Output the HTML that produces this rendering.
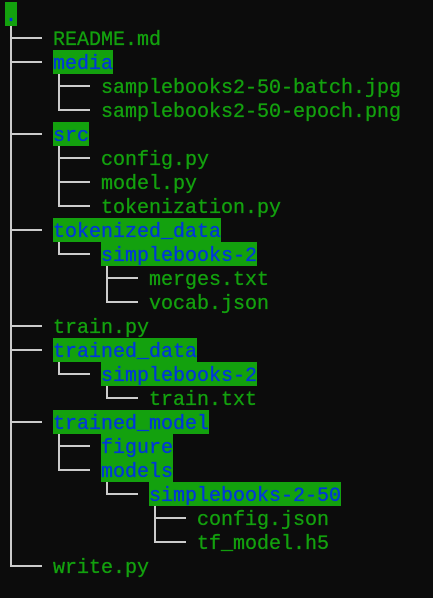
<!DOCTYPE html>
<html><head><style>
html,body{margin:0;padding:0;background:#0c0c0c;width:433px;height:598px;overflow:hidden;position:relative}
.t{position:absolute;padding-top:2px;height:22px;line-height:26px;font-family:"Liberation Mono",monospace;font-size:20px;color:#13a10e;white-space:pre;-webkit-text-stroke:0.3px #13a10e}
.h{background:#13a10e;color:#0037da;-webkit-text-stroke:0.3px #0037da}
.v{position:absolute;width:2px;background:#cccccc}
.r{position:absolute;height:2px;width:32px;background:#cccccc}
</style></head><body>
<div class="t h" style="left:5px;top:2px">.</div>
<div class="t" style="left:53px;top:26px">README.md</div>
<div class="t h" style="left:53px;top:50px">media</div>
<div class="t" style="left:101px;top:74px">samplebooks2-50-batch.jpg</div>
<div class="t" style="left:101px;top:98px">samplebooks2-50-epoch.png</div>
<div class="t h" style="left:53px;top:122px">src</div>
<div class="t" style="left:101px;top:146px">config.py</div>
<div class="t" style="left:101px;top:170px">model.py</div>
<div class="t" style="left:101px;top:194px">tokenization.py</div>
<div class="t h" style="left:53px;top:218px">tokenized_data</div>
<div class="t h" style="left:101px;top:242px">simplebooks-2</div>
<div class="t" style="left:149px;top:266px">merges.txt</div>
<div class="t" style="left:149px;top:290px">vocab.json</div>
<div class="t" style="left:53px;top:314px">train.py</div>
<div class="t h" style="left:53px;top:338px">trained_data</div>
<div class="t h" style="left:101px;top:362px">simplebooks-2</div>
<div class="t" style="left:149px;top:386px">train.txt</div>
<div class="t h" style="left:53px;top:410px">trained_model</div>
<div class="t h" style="left:101px;top:434px">figure</div>
<div class="t h" style="left:101px;top:458px">models</div>
<div class="t h" style="left:149px;top:482px">simplebooks-2-50</div>
<div class="t" style="left:197px;top:506px">config.json</div>
<div class="t" style="left:197px;top:530px">tf_model.h5</div>
<div class="t" style="left:53px;top:554px">write.py</div>

<div class="v" style="left:10px;top:26px;height:541px"></div>
<div class="v" style="left:58px;top:74px;height:37px"></div>
<div class="v" style="left:58px;top:146px;height:61px"></div>
<div class="v" style="left:58px;top:242px;height:13px"></div>
<div class="v" style="left:106px;top:266px;height:37px"></div>
<div class="v" style="left:58px;top:362px;height:13px"></div>
<div class="v" style="left:106px;top:386px;height:13px"></div>
<div class="v" style="left:58px;top:434px;height:37px"></div>
<div class="v" style="left:106px;top:482px;height:13px"></div>
<div class="v" style="left:154px;top:506px;height:37px"></div>

<div class="r" style="left:10px;top:37px"></div>
<div class="r" style="left:10px;top:61px"></div>
<div class="r" style="left:58px;top:85px"></div>
<div class="r" style="left:58px;top:109px"></div>
<div class="r" style="left:10px;top:133px"></div>
<div class="r" style="left:58px;top:157px"></div>
<div class="r" style="left:58px;top:181px"></div>
<div class="r" style="left:58px;top:205px"></div>
<div class="r" style="left:10px;top:229px"></div>
<div class="r" style="left:58px;top:253px"></div>
<div class="r" style="left:106px;top:277px"></div>
<div class="r" style="left:106px;top:301px"></div>
<div class="r" style="left:10px;top:325px"></div>
<div class="r" style="left:10px;top:349px"></div>
<div class="r" style="left:58px;top:373px"></div>
<div class="r" style="left:106px;top:397px"></div>
<div class="r" style="left:10px;top:421px"></div>
<div class="r" style="left:58px;top:445px"></div>
<div class="r" style="left:58px;top:469px"></div>
<div class="r" style="left:106px;top:493px"></div>
<div class="r" style="left:154px;top:517px"></div>
<div class="r" style="left:154px;top:541px"></div>
<div class="r" style="left:10px;top:565px"></div>
</body></html>
